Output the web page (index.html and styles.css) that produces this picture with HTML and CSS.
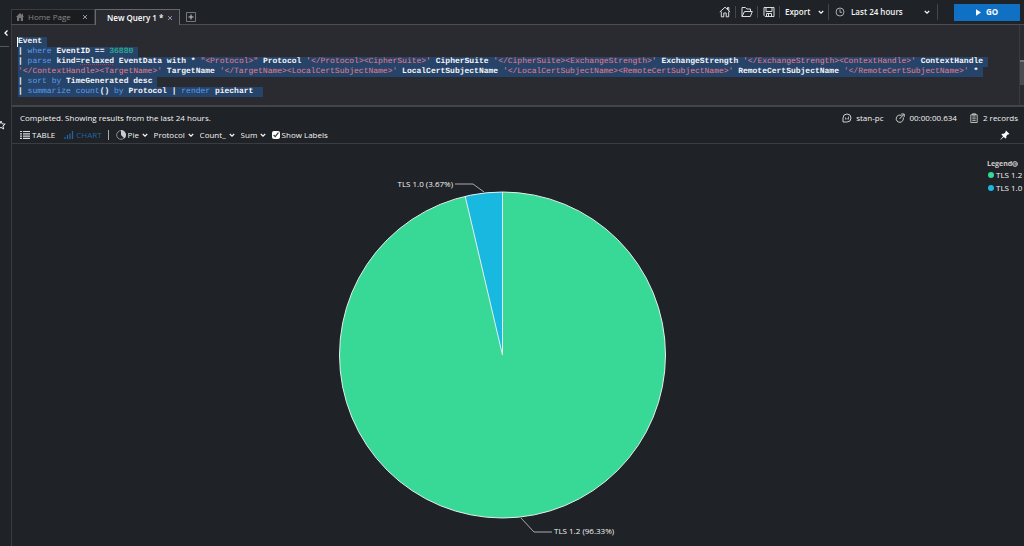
FILE: index.html
```
<!DOCTYPE html>
<html lang="en">
<head>
<meta charset="UTF-8">
<meta name="viewport" content="width=device-width, initial-scale=1.0">
<title>Log Analytics - New Query 1</title>
<link rel="stylesheet" href="styles.css">
</head>
<body>
<svg class="defs" aria-hidden="true">
  <symbol id="chevron" viewBox="0 0 6 6"><path d="M.8 2 L3 4.2 L5.2 2" fill="none" stroke="currentColor" stroke-width="1.3"/></symbol>
  <symbol id="cross" viewBox="0 0 6 6"><path d="M1 1 L5 5 M5 1 L1 5" fill="none" stroke="currentColor"/></symbol>
</svg>

<div class="app">
  <aside class="rail">
    <button class="collapse" aria-label="Collapse">
      <svg viewBox="0 0 6 8"><path d="M4.5 1.5 L2 4 L4.5 6.5" fill="none" stroke="#fff" stroke-width="1.3"/></svg>
    </button>
    <button class="star" aria-label="Favorites">
      <svg viewBox="0 0 10 10"><path d="M5 1 L6.2 3.9 L9.2 4.1 L6.9 6 L7.7 9 L5 7.4 L2.3 9 L3.1 6 L.8 4.1 L3.8 3.9Z" fill="none" stroke="#eee"/></svg>
    </button>
  </aside>

  <main class="main">
    <header class="topbar">
      <nav class="tabs">
        <div class="tab">
          <a href="#home">
            <svg class="tab-icon" viewBox="0 0 8 8"><path d="M4 0 L0 4 H1 V8 H3.2 V5 H4.8 V8 H7 V4 H8 L7 3 V.8 H6 V2Z" fill="#777"/></svg>
            Home Page
          </a>
          <button class="close" aria-label="Close Home Page"><svg><use href="#cross"/></svg></button>
        </div>
        <div class="tab active">
          <a href="#query">New Query 1 *</a>
          <button class="close" aria-label="Close New Query 1"><svg><use href="#cross"/></svg></button>
        </div>
        <button class="add" aria-label="New tab">
          <svg viewBox="0 0 10 10"><path d="M.5 .5 H9.5 V9.5 H.5Z" fill="none" stroke="#777"/><path d="M5 2.5 V7.5 M2.5 5 H7.5" stroke="#ccc"/></svg>
        </button>
      </nav>
      <div class="tools">
        <button class="tool" aria-label="Home">
          <svg viewBox="0 0 12 12"><path d="M.8 6 L6 1.2 L11.2 6 M8.5 3 V1.5 H9.8 V4.5 M2.3 5.5 V10.8 H4.8 V7 H7.2 V10.8 H9.7 V5.5" fill="none" stroke="#ddd"/></svg>
        </button>
        <button class="tool" aria-label="Open">
          <svg viewBox="0 0 12 12"><path d="M1 10.5 V1.5 H4.5 L5.8 3 H9.5 V5 M1 10.5 L3.5 5.5 H11.3 L9.3 10.5Z" fill="none" stroke="#ddd"/></svg>
        </button>
        <button class="tool" aria-label="Save">
          <svg viewBox="0 0 12 12"><path d="M1 1.5 H11 V10.5 H2.2 L1 9.3Z M3 1.5 V5.5 H9 V1.5 M3.5 10.5 V7.5 H8.5 V10.5 M5.5 8 V10" fill="none" stroke="#ddd"/></svg>
        </button>
        <button class="export">Export <svg class="chevron"><use href="#chevron"/></svg></button>
        <label class="range">
          <svg class="clock" viewBox="0 0 10 10"><circle cx="5" cy="5" r="4" fill="none" stroke="#ccc" stroke-width=".8"/><path d="M5 2.3 V5.3 H7" fill="none" stroke="#ccc" stroke-width=".8"/></svg>
          <select aria-label="Time range"><option>Last 24 hours</option></select>
          <svg class="chevron"><use href="#chevron"/></svg>
        </label>
        <button class="go">
          <svg viewBox="0 0 6 8"><path d="M0 0 L6 4 L0 8Z" fill="#fff"/></svg>
          GO
        </button>
      </div>
    </header>

    <section class="editor">
<pre class="code"><code><span class="sel caret">Event </span>
<span class="sel">| <i>where</i> EventID == <em>36880</em> </span>
<span class="sel">| <i>parse</i> kind=<u>relaxed</u> EventData with * <q>"&lt;Protocol&gt;"</q> Protocol <q>'&lt;/Protocol&gt;&lt;CipherSuite&gt;'</q> CipherSuite <q>'&lt;/CipherSuite&gt;&lt;ExchangeStrength&gt;'</q> ExchangeStrength <q>'&lt;/ExchangeStrength&gt;&lt;ContextHandle&gt;'</q> ContextHandle </span>
<span class="sel"><q>'&lt;/ContextHandle&gt;&lt;TargetName&gt;'</q> TargetName <q>'&lt;/TargetName&gt;&lt;LocalCertSubjectName&gt;'</q> LocalCertSubjectName <q>'&lt;/LocalCertSubjectName&gt;&lt;RemoteCertSubjectName&gt;'</q> RemoteCertSubjectName <q>'&lt;/RemoteCertSubjectName&gt;'</q> * </span>
<span class="sel">| <i>sort</i> <i>by</i> TimeGenerated desc </span>
<span class="sel">| <i>summarize</i> <i>count</i>() <i>by</i> Protocol | <i>render</i> piechart  </span></code></pre>
      <div class="scrollbar"><div class="thumb"></div></div>
    </section>

    <section class="results">
      <div class="status">
        <p>Completed. Showing results from the last 24 hours.</p>
        <ul class="stats">
          <li>
            <svg viewBox="0 0 10 10"><path d="M1 9 V5 A4 4 0 1 1 5 9Z" fill="none" stroke="#ccc"/><path d="M3.5 4.5 V6.5 M5 5 V6.5 M6.5 3.5 V6.5" stroke="#ccc" stroke-width=".8"/></svg>
            stan-pc
          </li>
          <li>
            <svg viewBox="0 0 10 10"><path d="M6.5 2.5 A3.6 3.6 0 1 0 8.2 4.5 M4.5 6 L9 1.2 M6.2 1 H9.2 V4" fill="none" stroke="#ccc"/></svg>
            00:00:00.634
          </li>
          <li>
            <svg viewBox="0 0 10 10"><path d="M1.8 1.8 H8.2 V9.5 H1.8Z M3.5 .8 H6.5 V2 H3.5Z M3.3 4 H6.7 M3.3 5.8 H6.7 M3.3 7.6 H6.7" fill="none" stroke="#ccc" stroke-width=".9"/></svg>
            2 records
          </li>
        </ul>
      </div>
      <div class="options">
        <button class="view">
          <svg viewBox="0 0 10 8"><path d="M0 .5 H2 M3 .5 H10 M0 2.8 H2 M3 2.8 H10 M0 5.1 H2 M3 5.1 H10 M0 7.4 H2 M3 7.4 H10" stroke="#ddd" stroke-width="1.2"/></svg>
          TABLE
        </button>
        <button class="view current">
          <svg viewBox="0 0 10 8"><path d="M1 8 V6 M3.5 8 V4 M6 8 V2.5 M8.5 8 V0" stroke="currentColor" stroke-width="1.3"/></svg>
          CHART
        </button>
        <span class="bar"></span>
        <label class="pick">
          <svg class="pie-icon" viewBox="0 0 10 10"><circle cx="5" cy="5" r="4.3" fill="none" stroke="#999" stroke-width=".9"/><path d="M5 0 A5 5 0 0 1 8.5 8.5 L5 5Z" fill="#ccc"/></svg>
          <select aria-label="Chart type"><option>Pie</option></select>
          <svg class="chevron"><use href="#chevron"/></svg>
        </label>
        <label class="pick">
          <select aria-label="Category"><option>Protocol</option></select>
          <svg class="chevron"><use href="#chevron"/></svg>
        </label>
        <label class="pick">
          <select aria-label="Value"><option>Count_</option></select>
          <svg class="chevron"><use href="#chevron"/></svg>
        </label>
        <label class="pick">
          <select aria-label="Aggregation"><option>Sum</option></select>
          <svg class="chevron"><use href="#chevron"/></svg>
        </label>
        <label class="check"><input type="checkbox" checked> Show Labels</label>
        <button class="pin" aria-label="Pin to dashboard">
          <svg viewBox="0 0 10 10"><path d="M6 .5 L9.5 4 L8.5 4.5 L8 4.3 L6.3 6 L6.3 8 L5.5 8.6 L3.7 6.9 L.6 9.7 L.3 9.4 L3.1 6.3 L1.4 4.5 L2 3.7 L4 3.7 L5.7 2 L5.5 1.2Z" fill="#fff"/></svg>
        </button>
      </div>
    </section>

    <section class="chart">
      <svg class="pie" viewBox="12 144 972 402" role="img" aria-label="TLS versions by protocol">
        <circle cx="502.5" cy="355" r="163" fill="#38d996"/>
        <path d="M502.5 355 L465.2 196.3 A163 163 0 0 1 502.5 192Z" fill="#19b8e1"/>
        <path d="M465.2 196.3 L502.5 355 V192" class="edge"/>
        <circle cx="502.5" cy="355" r="163" class="edge"/>
        <path d="M455 184 H473 L484 192" class="leader"/>
        <path d="M521 518 L534 532 H552" class="leader"/>
        <text x="453" y="187" text-anchor="end">TLS 1.0 (3.67%)</text>
        <text x="554" y="534">TLS 1.2 (96.33%)</text>
      </svg>
      <div class="legend">
        <h2>Legend<svg viewBox="0 0 6 6"><circle cx="3" cy="3" r="2.4" fill="none" stroke="#ccc"/><path d="M1 3 H4.5 M3 1.5 L4.5 3 L3 4.5" fill="none" stroke="#ccc" stroke-width=".8"/></svg></h2>
        <ul>
          <li><span class="dot green"></span>TLS 1.2</li>
          <li><span class="dot blue"></span>TLS 1.0</li>
        </ul>
      </div>
    </section>
  </main>
</div>
</body>
</html>
```
FILE: styles.css
```
* {
  box-sizing: border-box;
}
body {
  margin: 0;
  background: #1f2226;
  color: #f4f4f4;
  font: 8px/10px "Open Sans", "Noto Sans", sans-serif;
}
button, select, input {
  font: inherit;
  color: inherit;
  margin: 0;
  padding: 0;
  border: 0;
  background: none;
}
select {
  appearance: none;
  outline: none;
}
select option {
  background: #1f2226;
}
button {
  cursor: pointer;
}
a {
  color: inherit;
  text-decoration: none;
}
ul, p, pre, h2 {
  margin: 0;
  padding: 0;
  list-style: none;
}
svg {
  display: block;
  flex: none;
}
.defs {
  position: absolute;
  width: 0;
  height: 0;
}
.chevron {
  width: 6px;
  height: 6px;
}
.app {
  display: flex;
  min-height: 100vh;
}

/* left rail */
.rail {
  width: 11px;
  flex: none;
  overflow: hidden;
}
.collapse {
  display: block;
  width: 9px;
  height: 47px;
  padding: 0 0 0 3px;
  border-bottom: 1px solid #55585c;
}
.collapse svg {
  width: 6px;
  height: 8px;
  margin-top: 20px;
}
.star {
  display: block;
  margin: 73px 0 0 -4px;
}
.star svg {
  width: 10px;
  height: 10px;
}

.main {
  flex: 1;
  min-width: 0;
  display: flex;
  flex-direction: column;
}

/* tabs and toolbar */
.topbar {
  display: flex;
  justify-content: space-between;
  height: 25px;
  border-bottom: 1px solid #4b4d51;
}
.tabs {
  display: flex;
  align-items: flex-end;
}
.tab {
  display: flex;
  align-items: center;
  justify-content: space-between;
  width: 84px;
  height: 15px;
  padding: 0 6px 0 4px;
  border: 1px solid #3a3c40;
  border-bottom: 0;
  background: #1a1c1f;
  color: #888;
}
.tab a {
  display: flex;
  align-items: center;
  gap: 4px;
}
.tab-icon {
  width: 8px;
  height: 8px;
}
.tab.active {
  width: 85px;
  margin-bottom: -1px;
  height: 16px;
  padding-left: 11px;
  border-color: #66686c;
  background: #292b30;
  color: #fff;
  font-weight: 600;
}
.close {
  color: #8a9aa8;
}
.close svg {
  width: 6px;
  height: 6px;
}
.add {
  margin: 0 0 2px 6px;
}
.add svg {
  width: 10px;
  height: 10px;
}
.tools {
  display: flex;
  align-items: center;
  padding-right: 4px;
  font-weight: 600;
}
.tool {
  width: 22px;
  height: 12px;
  padding: 0 5px;
  border-right: 1px solid #44474b;
}
.tool svg {
  width: 12px;
  height: 12px;
}
.export {
  display: flex;
  align-items: center;
  justify-content: space-between;
  width: 49px;
  height: 16px;
  padding: 0 4px 0 5px;
  border-right: 1px solid #44474b;
}
.range {
  display: flex;
  align-items: center;
  width: 109px;
  height: 16px;
  padding: 0 7px 0 6px;
  gap: 6px;
  border-right: 1px solid #44474b;
}
.range select {
  flex: 1;
}
.clock {
  width: 10px;
  height: 10px;
}
.go {
  display: flex;
  align-items: center;
  justify-content: center;
  gap: 5px;
  width: 66px;
  height: 17px;
  margin-left: 16px;
  background: #1070c4;
  color: #fff;
  font-weight: 700;
}
.go svg {
  width: 5px;
  height: 7px;
}

/* query editor */
.editor {
  display: flex;
  justify-content: space-between;
  height: 82px;
  border-left: 1px solid #3a3c40;
  border-bottom: 2px solid #424448;
  background: #292b30;
}
.code {
  padding: 12px 0 0 6px;
}
.code, .code code {
  font: bold 8px/10px "Liberation Mono", monospace;
  text-rendering: geometricPrecision;
}
.sel {
  display: inline-block;
  height: 10px;
  background: #26436a;
}
.caret {
  box-shadow: -1px 0 #fff;
}
.code i {
  font-style: normal;
  font-weight: normal;
  color: #5c9ee8;
}
.code em {
  font-style: normal;
  font-weight: normal;
  color: #2fc99b;
}
.code q {
  quotes: none;
  font-weight: normal;
  color: #e5808c;
}
.code u {
  text-decoration: underline dotted #d02c3c;
}
.scrollbar {
  width: 5px;
  flex: none;
  border-left: 1px solid #393b3f;
}
.thumb {
  height: 25px;
  margin-top: 35px;
  border-top: 2px solid #777;
  background: #4a4b4f;
}

/* results */
.results {
  border-left: 1px solid #3a3c40;
  border-bottom: 1px solid #3a3c40;
  padding: 6px 6px 2px 8px;
}
.status {
  display: flex;
  justify-content: space-between;
}
.stats {
  display: flex;
  gap: 12px;
}
.stats li {
  display: flex;
  align-items: center;
  gap: 4px;
}
.stats svg {
  width: 10px;
  height: 10px;
}
.options {
  display: flex;
  align-items: center;
  height: 18px;
  padding-top: 6px;
}
.view {
  display: flex;
  align-items: center;
  gap: 2px;
  margin-right: 9px;
}
.view svg {
  width: 10px;
  height: 8px;
}
.current {
  margin-right: 6px;
  color: #21659f;
}
.bar {
  width: 1px;
  height: 10px;
  margin-right: 7px;
  background: #aaa;
}
.pick {
  display: flex;
  align-items: center;
  gap: 2px;
  margin-right: 6px;
}
.pie-icon {
  width: 10px;
  height: 10px;
}
.check {
  display: flex;
  align-items: center;
  gap: 2px;
}
.check input {
  width: 8px;
  height: 8px;
  accent-color: #fff;
}
.pin {
  margin: 0 8px 0 auto;
}
.pin svg {
  width: 10px;
  height: 10px;
}

/* chart */
.chart {
  flex: 1;
  display: flex;
  border-left: 1px solid #3a3c40;
}
.pie {
  flex: 1;
  min-width: 0;
}
.pie text {
  fill: #f4f4f4;
  font-size: 8px;
}
.edge {
  fill: none;
  stroke: #e4efec;
}
.leader {
  fill: none;
  stroke: #aaa;
}
.legend {
  width: 40px;
  padding: 16px 0 0 3px;
}
.legend h2 {
  display: flex;
  align-items: center;
  font-size: 7px;
  line-height: 8px;
  color: #ccc;
}
.legend h2 svg {
  width: 6px;
  height: 6px;
}
.legend li {
  display: flex;
  align-items: center;
  gap: 2px;
  height: 13px;
  padding-left: 1px;
  white-space: nowrap;
}
.dot {
  width: 6px;
  height: 6px;
  border-radius: 50%;
}
.green {
  background: #38d996;
}
.blue {
  background: #19b8e1;
}
```
